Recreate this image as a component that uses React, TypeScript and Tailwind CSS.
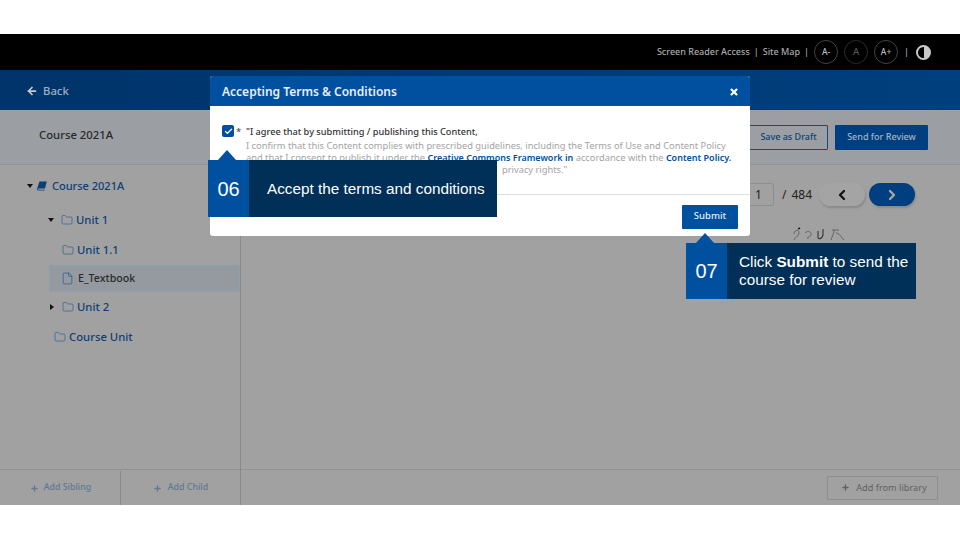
import { ArrowLeft, ChevronLeft, ChevronRight, Folder, File, Plus, X, Check } from "lucide-react";

const TreeRow = ({ label, left, caret }: { label: string; left: string; caret?: "down" | "right" }) => (
  <div className={`flex h-[30px] items-center text-[11.3px] font-medium text-[#0d3f78] ${left}`}>
    {caret === "down" && <span className="h-0 w-0 border-x-[3.5px] border-t-[4px] border-x-transparent border-t-[#111]" />}
    {caret === "right" && <span className="h-0 w-0 border-y-[3.5px] border-l-[4px] border-y-transparent border-l-[#111]" />}
    <Folder size={12} strokeWidth={1.3} className={`mr-[3px] text-[#2a5a92] ${caret === "down" ? "ml-[7px]" : caret === "right" ? "ml-[8px]" : "ml-[14px]"}`} />
    {label}
  </div>
);

const Callout = ({ num, className, textClass, children }: { num: string; className: string; textClass: string; children: React.ReactNode }) => (
  <div className={`absolute flex font-['Liberation_Sans',sans-serif] text-white ${className}`}>
    <div className="relative flex w-[41px] items-center justify-center bg-[#0050a0] text-[20px]">
      <span className="absolute -top-[10px] left-[10px] h-0 w-0 border-x-[9px] border-b-[10px] border-x-transparent border-b-[#0050a0]" />
      {num}
    </div>
    <div className={`flex flex-1 items-center bg-[#002f57] text-[15.3px] leading-[18px] ${textClass}`}>{children}</div>
  </div>
);

export default function App() {
  return (
    <div className="relative h-[540px] w-[960px] overflow-hidden bg-white font-['Noto_Sans',sans-serif]">
      <div className="h-[34px]" />
      <div className="flex h-[36px] items-center justify-end bg-black pr-[29px] text-[9px] font-medium text-[#a9a9a9]">
        <span>Screen Reader Access</span>
        <span className="mx-[4px]">|</span>
        <span>Site Map</span>
        <span className="ml-[4px]">|</span>
        <span className="ml-[5px] flex h-[24px] w-[24px] items-center justify-center rounded-full border border-[#444] text-[8.5px] text-[#bbb]">A-</span>
        <span className="ml-[6px] flex h-[24px] w-[24px] items-center justify-center rounded-full border border-[#2c2c2c] text-[9.5px] text-[#555]">A</span>
        <span className="ml-[6px] flex h-[24px] w-[24px] items-center justify-center rounded-full border border-[#444] text-[8.5px] text-[#bbb]">A+</span>
        <span className="ml-[6px]">|</span>
        <span className="ml-[7px] h-[15px] w-[15px] rounded-full border-2 border-[#c9c9c9] bg-[linear-gradient(90deg,#000_50%,#c9c9c9_50%)]" />
      </div>
      <div className="flex h-[40px] items-center bg-[linear-gradient(90deg,#00346a,#003f7d)] pl-[26px] pt-[2px] text-[11.3px] font-medium text-[#9fb0c4]">
        <ArrowLeft size={12} strokeWidth={3.5} className="mr-[5px] text-[#c8c8c8]" />
        Back
      </div>
      <div className="flex h-[55px] items-center border-b border-[#8d9399] bg-[#9b9fa3] pl-[39px] pr-[32px]">
        <span className="pb-[4px] text-[11.3px] font-medium text-[#26292c]">Course 2021A</span>
        <div className="ml-auto flex gap-[7px] text-[9px] font-medium">
          <span className="flex h-[25px] w-[79px] items-center justify-center rounded-[1px] border border-[#0c4a8a] text-[#0c3f78]">Save as Draft</span>
          <span className="flex h-[25px] w-[93px] items-center justify-center rounded-[1px] bg-[#003f7f] text-[#a3b4c8]">Send for Review</span>
        </div>
      </div>
      <div className="flex h-[340px] bg-[#a1a1a1]">
        <div className="flex w-[241px] flex-col border-r border-[#8a8a8a]">
          <div className="flex-1 pt-[6px]">
            <div className="flex h-[29px] items-center pl-[27px] pt-[1px] text-[11px] font-medium text-[#0d3f78]">
              <span className="mr-[4px] h-0 w-0 border-x-[3.5px] border-t-[4px] border-x-transparent border-t-[#111]" />
              <svg width="10" height="10" viewBox="0 0 10 10" className="mr-[5px]">
                <path d="M2.4 0.5H9.8L8 7.6H1.8C1 7.6 0.8 8.8 1.6 8.8H7.6L7.4 9.6H1.4C0.3 9.6 0 8.6 0.2 7.6Z" fill="#0c3f78" />
              </svg>
              Course 2021A
            </div>
            <div className="mt-[5px]">
              <TreeRow label="Unit 1" left="pl-[48px]" caret="down" />
              <TreeRow label="Unit 1.1" left="pl-[48px]" />
              <div className="ml-[49px] flex h-[27px] items-center border border-[#8fa0ad] bg-[#949a9f] pl-[11px] text-[10.7px] font-medium text-[#2a2a2a]">
                <File size={13} strokeWidth={1.3} className="mr-[4px] text-[#2a5a92]" />
                E_Textbook
              </div>
              <TreeRow label="Unit 2" left="pl-[50px]" caret="right" />
              <div className="flex h-[30px] items-center pl-[54px] text-[11.3px] font-medium text-[#0d3f78]">
                <Folder size={12} strokeWidth={1.3} className="mr-[3px] text-[#2a5a92]" />
                Course Unit
              </div>
            </div>
          </div>
          <div className="flex h-[36px] border-t border-[#929292] pt-[1px] text-[8.8px] font-medium text-[#5f7894]">
            <div className="flex w-[121px] items-center justify-center border-r border-[#8a8a8a] pl-[1px]">
              <Plus size={9} strokeWidth={3.5} className="mr-[5px]" />
              Add Sibling
            </div>
            <div className="flex flex-1 items-center justify-center">
              <Plus size={9} strokeWidth={3.5} className="mr-[6px]" />
              Add Child
            </div>
          </div>
        </div>
        <div className="flex flex-1 flex-col">
          <div className="flex flex-1 justify-end pr-[45px] pt-[18px]">
            <div className="flex h-[23px] items-center text-[12px] text-[#222]">
              <span className="flex h-[23px] w-[24px] items-center justify-start rounded-r-[3px] border border-l-0 border-[#8e8e8e] pl-[5px]">1</span>
              <span className="ml-[8px]">/</span>
              <span className="ml-[5px]">484</span>
              <span className="ml-[7px] flex h-[23px] w-[46px] items-center justify-center rounded-full bg-[#a4a4a4] shadow-[1px_2px_2px_#8a8a8a]">
                <ChevronLeft size={16} strokeWidth={3.5} className="text-[#111]" />
              </span>
              <span className="ml-[4px] flex h-[23px] w-[46px] items-center justify-center rounded-full bg-[#003f7f] shadow-[1px_2px_2px_#8a8a8a]">
                <ChevronRight size={16} strokeWidth={3.5} className="text-[#a8a8a8]" />
              </span>
            </div>
          </div>
          <div className="flex h-[36px] items-center justify-end border-t border-[#929292] pr-[22px]">
            <span className="flex h-[24px] w-[111px] items-center justify-center rounded-[1px] border border-[#8e8e8e] pl-[3px] text-[9.2px] text-[#626262]">
              <Plus size={9} strokeWidth={3.5} className="mr-[6px]" />
              Add from library
            </span>
          </div>
        </div>
      </div>

      <svg width="56" height="18" viewBox="0 0 56 18" fill="none" stroke="#555" strokeWidth="0.8" className="absolute left-[791px] top-[226px]">
        <path d="M3 8C3 4 8 3 8 7C8 11 3 11 3 14" />
        <path d="M7 3L9 2" stroke="#222" strokeWidth="1.4" />
        <path d="M14 7C17 4 21 6 20 9C19 11 16 10 17 13" />
        <path d="M27 5L27 11C27 14 31 13 32 9L32 3" stroke="#333" strokeWidth="1.1" />
        <path d="M41 4H48M43 4C43 8 41 10 40 14M45 7C48 7 50 11 53 14" />
      </svg>

      <div className="absolute left-[210px] top-[76px] h-[160px] w-[540px] rounded-[3px] bg-white">
        <div className="flex h-[30px] items-center justify-between rounded-t-[3px] bg-[#0050a0] pl-[12px] pr-[11px] pt-[1px] text-[12px] font-semibold text-[#e8eef5]">
          Accepting Terms &amp; Conditions
          <X size={10} strokeWidth={5} className="text-white" />
        </div>
        <div className="flex h-[88.5px] border-b border-[#dedede] pl-[12px] pt-[19px]">
          <span className="flex h-[12px] w-[12px] items-center justify-center rounded-[2px] bg-[#0050a0]">
            <Check size={9} strokeWidth={3.5} className="text-white" />
          </span>
          <span className="ml-[2px] w-[10px] text-[9.5px] leading-[13px] text-[#333]">*</span>
          <div className="text-[9.3px] leading-[12px] text-[#a3a3a3]">
            <div className="h-[15px] pt-[1px] text-[9.2px] font-medium text-[#333]">"I agree that by submitting / publishing this Content,</div>
            <div>I confirm that this Content complies with prescribed guidelines, including the Terms of Use and Content Policy</div>
            <div>
              and that I consent to publish it under the <b className="text-[9px] font-semibold text-[#0050a0]">Creative Commons Framework in</b> accordance with the <b className="text-[9px] font-semibold text-[#0050a0]">Content Policy.</b>
            </div>
            <div className="pl-[256px]">privacy rights."</div>
          </div>
        </div>
        <div className="flex justify-end pr-[12px] pt-[10px]">
          <span className="flex h-[24px] w-[56px] items-center justify-center rounded-[1px] bg-[#0050a0] text-[9.5px] font-medium text-[#e8eef5]">Submit</span>
        </div>
      </div>

      <Callout num="06" className="left-[208px] top-[160px] h-[57px] w-[289px]" textClass="pl-[18px]">
        Accept the terms and conditions
      </Callout>
      <Callout num="07" className="left-[686px] top-[243px] h-[56px] w-[230px]" textClass="pl-[12px]">
        <span>Click <b>Submit</b> to send the course for review</span>
      </Callout>
    </div>
  );
}
